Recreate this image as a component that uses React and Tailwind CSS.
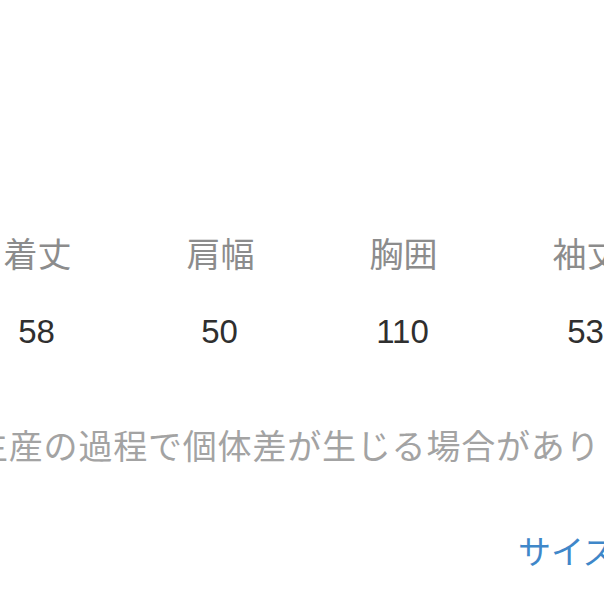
const sizes = [
  { label: "着丈", value: "58" },
  { label: "肩幅", value: "50" },
  { label: "胸囲", value: "110" },
  { label: "袖丈", value: "53" },
];

const jp = { fontFamily: '"Noto Sans CJK JP", "Noto Sans", sans-serif' };

export default function App() {
  return (
    <div className="w-[604px] h-[604px] overflow-hidden bg-white">
      <div className="flex flex-col pt-[233px]">
        {/* Labels */}
        <div className="flex ml-[-54px] w-max">
          {sizes.map((s) => (
            <div
              key={s.label}
              className="w-[183px] text-center text-[34px] leading-[40px] text-[#8c8c8c] whitespace-nowrap"
              style={jp}
            >
              {s.label}
            </div>
          ))}
        </div>

        {/* Values */}
        <div className="flex ml-[-55px] w-max mt-[39px]">
          {sizes.map((s) => (
            <div
              key={s.value}
              className="w-[183px] text-center text-[33px] leading-[40px] text-[#2f2f2f] font-['Liberation_Sans',sans-serif]"
            >
              {s.value}
            </div>
          ))}
        </div>

        {/* Note */}
        <div
          className="mt-[73px] ml-[-26px] whitespace-nowrap text-[34px] leading-[40px] tracking-[0.8px] text-[#a3a3a3]"
          style={jp}
        >
          生産の過程で個体差が生じる場合があります。
        </div>

        {/* Link */}
        <div
          className="mt-[65px] ml-[518px] whitespace-nowrap text-[33px] leading-[40px] text-[#3f87c9]"
          style={jp}
        >
          サイズガイド
        </div>
      </div>
    </div>
  );
}
